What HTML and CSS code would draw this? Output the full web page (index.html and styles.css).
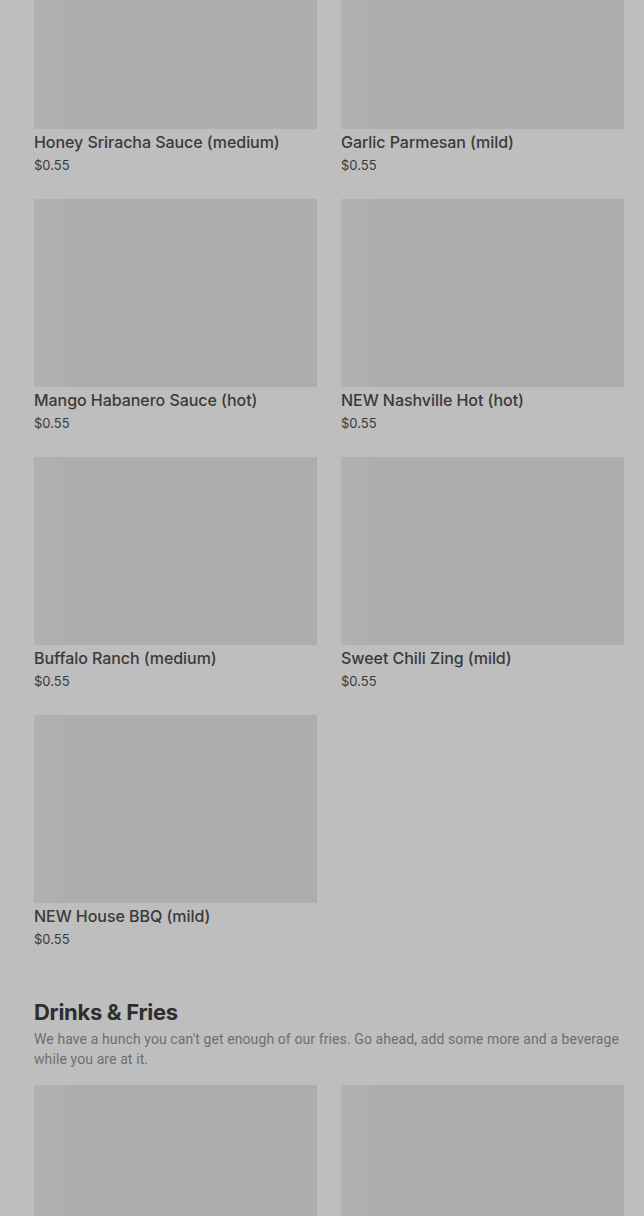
FILE: index.html
```html
<!DOCTYPE html>
<html lang="en">
  <head>
    <meta charset="UTF-8" />
    <meta name="viewport" content="width=device-width, initial-scale=1.0" />
    <title>Menu</title>
    <link rel="stylesheet" href="styles.css">
  </head>
  <body>
    <div class="menu">
      <section class="section">
        <div class="grid">
          <div class="item">
            <div class="thumb"></div>
            <p class="name">Honey Sriracha Sauce (medium)</p>
            <p class="price">$0.55</p>
          </div>
          <div class="item">
            <div class="thumb"></div>
            <p class="name">Garlic Parmesan (mild)</p>
            <p class="price">$0.55</p>
          </div>
          <div class="item">
            <div class="thumb"></div>
            <p class="name">Mango Habanero Sauce (hot)</p>
            <p class="price">$0.55</p>
          </div>
          <div class="item">
            <div class="thumb"></div>
            <p class="name">NEW Nashville Hot (hot)</p>
            <p class="price">$0.55</p>
          </div>
          <div class="item">
            <div class="thumb"></div>
            <p class="name">Buffalo Ranch (medium)</p>
            <p class="price">$0.55</p>
          </div>
          <div class="item">
            <div class="thumb"></div>
            <p class="name">Sweet Chili Zing (mild)</p>
            <p class="price">$0.55</p>
          </div>
          <div class="item">
            <div class="thumb"></div>
            <p class="name">NEW House BBQ (mild)</p>
            <p class="price">$0.55</p>
          </div>
        </div>
      </section>

      <section class="section">
        <h2 class="section-title">Drinks &amp; Fries</h2>
        <p class="section-desc">We have a hunch you can't get enough of our fries. Go ahead, add some more and a beverage while you are at it.</p>
        <div class="grid">
          <div class="item">
            <div class="thumb"></div>
          </div>
          <div class="item">
            <div class="thumb"></div>
          </div>
        </div>
      </section>
    </div>
  </body>
</html>
```

FILE: styles.css
```css
body {
  margin: 0;
  padding: 0;
  background-color: #bebebe;
  font-family: Inter, "Noto Sans", sans-serif;
  color: #3a3a3a;
  overflow: hidden;
}
.menu {
  margin-top: -59px;
  padding: 0 20px 0 34px;
}
.section {
  margin-bottom: 49px;
}
.grid {
  display: grid;
  grid-template-columns: 1fr 1fr;
  column-gap: 24px;
  row-gap: 24px;
}
.thumb {
  height: 188px;
  background-color: #adadad;
  background-image: linear-gradient(90deg, #b1b1b1 0, #adadad 40px);
}
.name {
  margin: 2px 0 0;
  font-size: 16px;
  line-height: 22px;
  font-weight: 500;
  letter-spacing: -0.05px;
}
.price {
  margin: 2px 0 0;
  font-size: 13px;
  line-height: 20px;
  color: #3a3a3a;
}
.section-title {
  margin: 0;
  font-size: 22px;
  line-height: 28px;
  font-weight: 700;
  letter-spacing: -0.3px;
  color: #2e2e2e;
}
.section-desc {
  margin: 3px 0 16px;
  font-family: Roboto, "Noto Sans", sans-serif;
  font-size: 14px;
  line-height: 20px;
  color: #6e6e6e;
  letter-spacing: 0.1px;
}
```
